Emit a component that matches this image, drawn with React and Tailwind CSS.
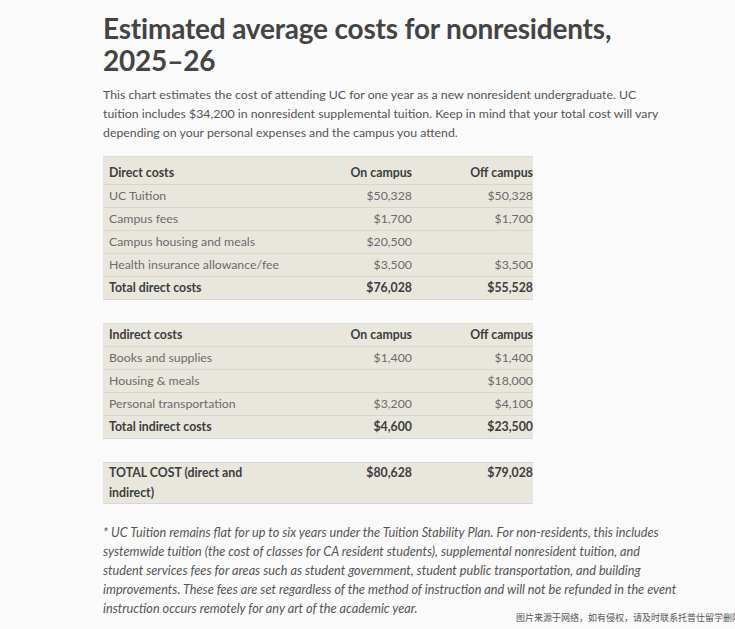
import React from "react";

const DIRECT = [
  { label: "UC Tuition", on: "$50,328", off: "$50,328" },
  { label: "Campus fees", on: "$1,700", off: "$1,700" },
  { label: "Campus housing and meals", on: "$20,500", off: "" },
  { label: "Health insurance allowance/fee", on: "$3,500", off: "$3,500" },
];

const INDIRECT = [
  { label: "Books and supplies", on: "$1,400", off: "$1,400" },
  { label: "Housing & meals", on: "", off: "$18,000" },
  { label: "Personal transportation", on: "$3,200", off: "$4,100" },
];

const cols = "grid grid-cols-[1fr_123px_121px]";

function Row({ label, on, off, bold }) {
  return (
    <div
      className={`${cols} h-[23px] items-center border-t border-[#d9d6cc] ${
        bold ? "font-bold text-[#3d3d3d]" : "text-[#6b6b6b]"
      }`}
    >
      <div className="pl-[6px]">{label}</div>
      <div className="text-right">{on}</div>
      <div className="text-right">{off}</div>
    </div>
  );
}

function CostTable({ title, rows, totalLabel, total, tallHead }) {
  return (
    <div className="bg-[#e9e6dd] border-b border-[#d9d6cc] w-[430px]">
      <div
        className={`${cols} font-bold text-[#3d3d3d] ${
          tallHead ? "h-[28px] pt-[5px]" : "h-[23px]"
        } items-center border-t border-[#dedbd2]`}
      >
        <div className="pl-[6px]">{title}</div>
        <div className="text-right">On campus</div>
        <div className="text-right">Off campus</div>
      </div>
      {rows.map((r) => (
        <Row key={r.label} {...r} />
      ))}
      <Row label={totalLabel} on={total[0]} off={total[1]} bold />
    </div>
  );
}

export default function App() {
  return (
    <div className="min-h-[629px] bg-[#fafafa] font-['Lato',sans-serif] relative overflow-hidden">
      <div className="pl-[103px] pt-[12px] w-[700px]">
        <h1 className="text-[28px] leading-[32px] font-bold text-[#444] tracking-[-0.2px]">
          Estimated average costs for nonresidents,
          <br />
          2025–26
        </h1>

        <p className="mt-[9px] text-[12.3px] leading-[19px] text-[#555] w-[565px]">
          This chart estimates the cost of attending UC for one year as a new nonresident
          undergraduate. UC tuition includes $34,200 in nonresident supplemental tuition. Keep in
          mind that your total cost will vary depending on your personal expenses and the campus
          you attend.
        </p>

        <div className="mt-[14px] text-[12.3px] flex flex-col gap-[23px]">
          <CostTable
            title="Direct costs"
            rows={DIRECT}
            totalLabel="Total direct costs"
            total={["$76,028", "$55,528"]}
            tallHead
          />
          <CostTable
            title="Indirect costs"
            rows={INDIRECT}
            totalLabel="Total indirect costs"
            total={["$4,600", "$23,500"]}
          />

          {/* grand total */}
          <div className="bg-[#e9e6dd] border-t border-b border-[#d9d6cc] w-[430px] h-[42px] font-bold text-[#3d3d3d]">
            <div className={`${cols} leading-[20px]`}>
              <div className="pl-[6px] w-[160px]">TOTAL COST (direct and indirect)</div>
              <div className="text-right">$80,628</div>
              <div className="text-right">$79,028</div>
            </div>
          </div>
        </div>

        <p className="mt-[19px] text-[12.7px] leading-[19px] italic text-[#555] w-[579px]">
          * UC Tuition remains flat for up to six years under the Tuition Stability Plan. For
          non-residents, this includes systemwide tuition (the cost of classes for CA resident
          students), supplemental nonresident tuition, and student services fees for areas such as
          student government, student public transportation, and building improvements. These fees
          are set regardless of the method of instruction and will not be refunded in the event
          instruction occurs remotely for any art of the academic year.
        </p>
      </div>

      <div className="absolute left-[516px] top-[611px] whitespace-nowrap text-[9px] leading-[14px] text-[#555] font-['Noto_Sans_CJK_SC',sans-serif]">
        图片来源于网络，如有侵权，请及时联系托普仕留学删除
      </div>
    </div>
  );
}
